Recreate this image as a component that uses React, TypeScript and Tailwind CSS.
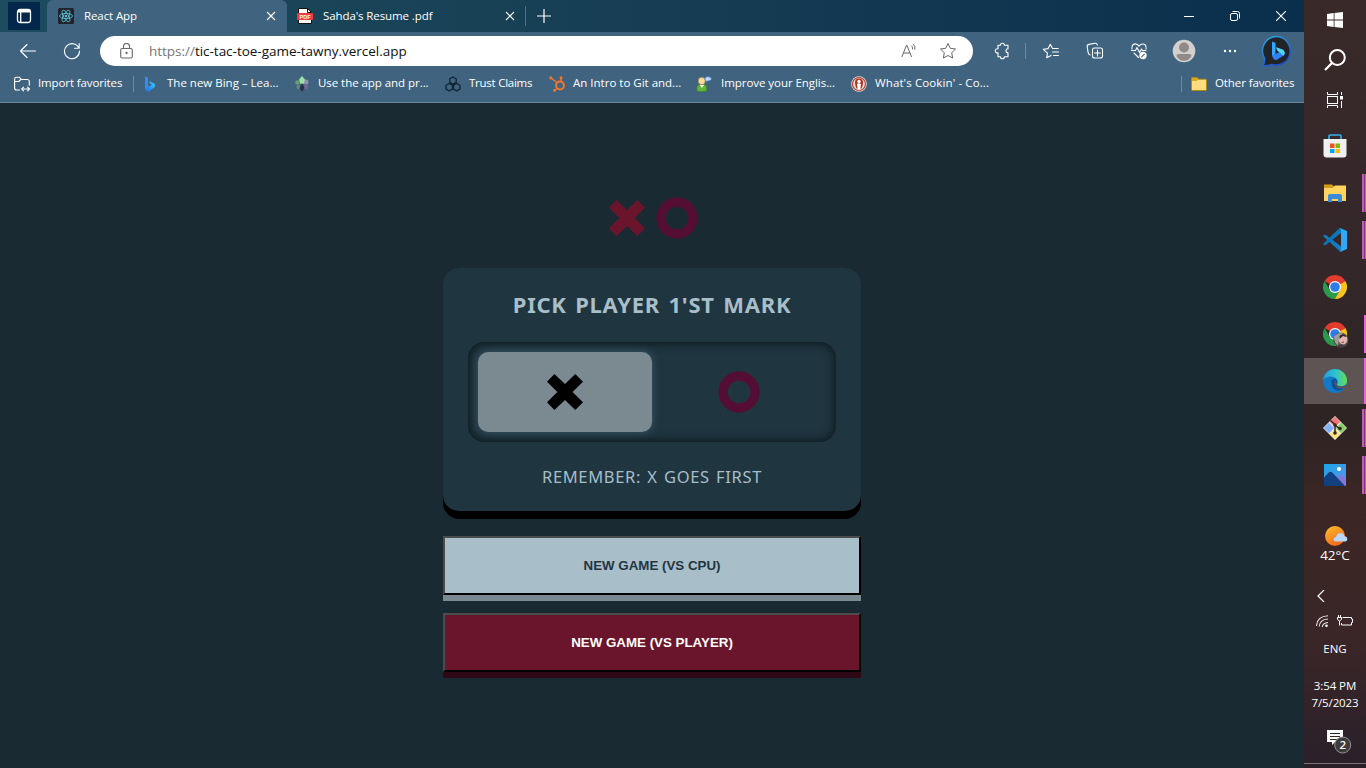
import React from "react";

const UI = "font-['Open_Sans','Noto_Sans',sans-serif]";

function Txt({ children, className = "" }: { children: React.ReactNode; className?: string }) {
  return <span className={`whitespace-nowrap ${UI} ${className}`}>{children}</span>;
}

function Close() {
  return (
    <svg width="10" height="10" viewBox="0 0 10 10" stroke="#fff" strokeWidth="1.1" className="shrink-0">
      <path d="M1 1 9 9M9 1 1 9" />
    </svg>
  );
}

function BingMark({ size = 16, id }: { size?: number; id: string }) {
  return (
    <svg width={size} height={size} viewBox="0 0 16 16" className="shrink-0">
      <defs>
        <linearGradient id={id} x1="0" y1="1" x2="1" y2="0">
          <stop offset="0" stopColor="#1b6df0" />
          <stop offset="1" stopColor="#3fd0f5" />
        </linearGradient>
      </defs>
      <path d="M2 .5 5 1.600v9.600l-3 2z" fill="#2f8dff" />
      <path d="M2 13.200 5 11l4-2.200-2-1-1-2.800 5.200 2.400c1.300 1 1.300 3 0 4.200L5.700 15.500C4.500 16 2.800 15 2 13.200z" fill={`url(#${id})`} />
    </svg>
  );
}

function CrossMark({ color }: { color: string }) {
  return (
    <svg width="36" height="36" viewBox="0 0 107 107" fill={color}>
      <path d="M22 0 53.5 30 84 0l23 23-31 30.5L107 84l-23 23-30.500-30L22 107 0 84l31-30.500L0 23z" />
    </svg>
  );
}

function CircleMark() {
  return (
    <svg width="42" height="42" viewBox="0 0 42 42" fill="none">
      <circle cx="21" cy="21" r="16" stroke="#540e33" strokeWidth="9.300" />
    </svg>
  );
}

function TabStrip() {
  return (
    <div className="flex h-8 items-center bg-gradient-to-r from-[#1d4c5e] via-[#163d53] to-[#0a2f4d]">
      <div className="ml-2 flex h-7 w-8 items-center justify-center bg-[#03274a]">
        <svg width="16" height="16" viewBox="0 0 16 16" fill="none" stroke="#fff" strokeWidth="1.3">
          <rect x="1.500" y="1.500" width="13" height="13" rx="2.500" />
          <path d="M2 3h12" strokeWidth="3" />
          <path d="M4.700 4v10" />
        </svg>
      </div>
      <div className="ml-[7px] flex h-8 w-60 items-center rounded-t-md bg-[#40637f] pl-[11px]">
        <svg width="16" height="16" viewBox="0 0 16 16" fill="none" stroke="#61c9e4" strokeWidth=".8">
          <rect width="16" height="16" rx="1.500" fill="#20232a" stroke="none" />
          <ellipse cx="8" cy="8" rx="6.500" ry="2.600" />
          <ellipse cx="8" cy="8" rx="6.500" ry="2.600" transform="rotate(60 8 8)" />
          <ellipse cx="8" cy="8" rx="6.500" ry="2.600" transform="rotate(120 8 8)" />
          <circle cx="8" cy="8" r="1" fill="#61c9e4" />
        </svg>
        <Txt className="ml-[10px] w-[182px] text-[11.500px] tracking-[-0.1px] text-white">React App</Txt>
        <Close />
      </div>
      <svg width="16" height="16" viewBox="0 0 16 16" className="ml-[10px]">
        <path d="M1.500.5h9l4 4v11h-13z" fill="#fff" stroke="#111" />
        <path d="M10.500.5v4h4" fill="none" stroke="#111" />
        <rect y="5" width="16" height="7" rx="1" fill="#f33b3b" />
        <text x="8" y="10.500" textAnchor="middle" fontSize="5.500" fontWeight="bold" fill="#fff" fontFamily="Liberation Sans">PDF</text>
      </svg>
      <Txt className="ml-[10px] w-[182px] text-[11.500px] tracking-[-0.1px] text-white">Sahda's Resume .pdf</Txt>
      <Close />
      <div className="ml-[10px] h-5 w-px bg-[#4f7486]" />
      <svg width="14" height="14" viewBox="0 0 14 14" stroke="#fff" strokeWidth="1.200" className="ml-[11px]">
        <path d="M7 0v14M0 7h14" />
      </svg>
      <div className="ml-auto flex items-center gap-9 pr-[18px]">
        <svg width="10" height="10" viewBox="0 0 10 10" stroke="#fff"><path d="M0 5.500h10" /></svg>
        <svg width="10" height="10" viewBox="0 0 10 10" fill="none" stroke="#fff">
          <rect x=".5" y="2.500" width="7" height="7" rx="1.500" />
          <path d="M2.500.5h5a2 2 0 0 1 2 2v5" />
        </svg>
        <svg width="10" height="10" viewBox="0 0 10 10" stroke="#fff" strokeWidth="1.100"><path d="M0 0 10 10M10 0 0 10" /></svg>
      </div>
    </div>
  );
}

const ic = { fill: "none", stroke: "#fff", strokeWidth: 1.1, strokeLinejoin: "round" as const, strokeLinecap: "round" as const };

function Toolbar() {
  return (
    <div className="flex h-[38px] items-center">
      <svg width="18" height="16" viewBox="0 0 18 16" {...ic} className="ml-[19px]">
        <path d="M16.500 8H1.500M8 1.500 1.500 8 8 14.500" />
      </svg>
      <svg width="18" height="18" viewBox="0 0 18 18" {...ic} className="ml-[26px]">
        <path d="M15.800 6A7.500 7.500 0 1 0 16.500 9M16.200 1.500v4.700h-4.700" />
      </svg>
      <div className="ml-[19px] flex h-[30px] w-[873px] items-center rounded-full bg-white pl-5">
        <svg width="13" height="16" viewBox="0 0 13 16" fill="none" stroke="#666" strokeWidth="1.100">
          <rect x=".7" y="5.500" width="11.600" height="9.500" rx="1.500" />
          <path d="M3.500 5.500V3.500a3 3 0 0 1 6 0v2" />
          <circle cx="6.500" cy="10" r=".6" fill="#555" />
        </svg>
        <Txt className="ml-4 text-[13.500px] tracking-[-0.02px] text-[#101010]">
          <span className="text-[#757575]">https://</span>tic-tac-toe-game-tawny.vercel.app
        </Txt>
        <svg width="16" height="16" viewBox="0 0 16 16" fill="none" stroke="#666" className="ml-auto">
          <path d="M.8 14 5.500 2.300h.4L10.600 14M2.300 10h6.700M10.500 2.800q1.500 1.200 1 3.500M12 1q2.700 2 1.800 5.700" />
        </svg>
        <svg width="18" height="18" viewBox="0 0 18 18" fill="none" stroke="#666" strokeLinejoin="round" className="mr-4 ml-[22px]">
          <path d="m9 1.500 2.300 4.800 5.200.7-3.800 3.700.9 5.300L9 13.500 4.400 16l.9-5.300L1.500 7l5.200-.7z" />
        </svg>
      </div>
      <svg width="18" height="18" viewBox="0 0 18 18" {...ic} className="ml-5">
        <path d="M5 3.300h2.400a2 2 0 0 1 4 0H15v3.500a2 2 0 0 0 0 4v4h-3.600a2 2 0 0 1-4 0H5v-4a2.100 2.100 0 1 1 0-4z" />
      </svg>
      <div className="ml-[14px] h-4 w-px bg-[#6c8ba2]" />
      <svg width="18" height="16" viewBox="0 0 18 16" {...ic} className="ml-4">
        <path d="M5.500 10.200 1.300 6.300l4.800-.7L8.300 1.200l2.200 4.300h5.700M10.500 9h6M11.500 12.500h5M5.500 10.200l-.8 4.500 4.300-2.300" />
      </svg>
      <svg width="18" height="18" viewBox="0 0 18 18" {...ic} className="ml-[26px]">
        <rect x="6.500" y="6" width="10" height="10" rx="2" />
        <path d="M11.500 8v6M8.500 11h6M4.300 13C3 12.800 2.500 12 2.200 10.800L1.200 5c-.2-1.500.5-2.300 1.700-2.600l6-1.100c1.300-.2 2 .4 2.500 1.700" />
      </svg>
      <svg width="18" height="18" viewBox="0 0 18 18" {...ic} className="ml-[26px]">
        <path d="M2 7C1 3 4.200 1.300 6.600 2.200 8 2.700 9 4.200 9 4.200s1-1.500 2.400-2C14 1.300 17 3 16 7M1.500 8.500h4l1.500-3 2.500 5L11.500 7l1 1.500H16M4 11l4.500 4.500" />
        <circle cx="13" cy="13.500" r="3.700" fill="#fff" stroke="none" />
        <path d="m11.700 14.800 2.600-2.600" stroke="#40637f" />
      </svg>
      <svg width="24" height="24" viewBox="0 0 24 24" className="ml-[24px]">
        <circle cx="12" cy="12" r="11.300" fill="#d2cfcc" />
        <circle cx="12" cy="8.500" r="5" fill="#8f8a87" />
        <path d="M4.500 17q0-2 2-2h11q2 0 2 2-2.500 4.800-7.500 4.800T4.500 17z" fill="#8f8a87" />
      </svg>
      <svg width="14" height="4" viewBox="0 0 14 4" fill="#fff" className="ml-[27px]">
        <circle cx="2" cy="2" r="1.200" /><circle cx="7" cy="2" r="1.200" /><circle cx="12" cy="2" r="1.200" />
      </svg>
      <svg width="32" height="32" viewBox="0 0 32 32" className="ml-6 shrink-0">
        <defs>
          <linearGradient id="ring" x1="0" y1="0" x2=".5" y2="1"><stop stopColor="#2aaee8" /><stop offset="1" stopColor="#1b4fd0" /></linearGradient>
        </defs>
        <path d="M16 1.500A14.300 14.300 0 1 1 11 29.500q-5 1.500-9 1.300 2-3 1.600-7.500A14.300 14.300 0 0 1 16 1.500z" fill="#222327" stroke="url(#ring)" strokeWidth="1.500" />
        <path d="M11 6.500 14.500 8v11L11 21z" fill="#35a4ff" />
        <path d="m11 20.500 7.500-3.500-2-1.200-1.500-3.600 7 2.500q3.500 4-.5 6.500l-6 3.800q-3 .5-4.500-4.500z" fill="#2f80f5" />
        <path d="m15 12.200 7 2.500q3.200 3 .5 6l-6-4.900z" fill="#4cd8ef" />
      </svg>
    </div>
  );
}

function Bookmark({ icon, label, cell, text = "" }: { icon: React.ReactNode; label: string; cell: string; text?: string }) {
  return (
    <div className={`flex shrink-0 items-center ${cell}`}>
      {icon}
      <Txt className={`pb-[2px] text-[11.500px] text-white ${text}`}>{label}</Txt>
    </div>
  );
}

function Bookmarks() {
  return (
    <div className="flex h-[32px] items-center pb-[4px] pl-[14px]">
      <Bookmark cell="w-[119px] gap-2" text="tracking-[-0.12px]" label="Import favorites" icon={
        <svg width="16" height="16" viewBox="0 0 16 16" {...ic} overflow="visible">
          <path d="M5.500 14H2.500Q.6 14 .6 12V3Q.6 1.300 2.500 1.300h3L7.500 3.500h5.500q2.300 0 2.300 2v3.800M.8 5.500h4l2-2M8 13h7.300M9.500 11.200 7.700 13l1.800 1.800M13.700 11.200l1.800 1.800-1.800 1.800" />
        </svg>
      } />
      <div className="h-4 w-px bg-[#6c8ba2]" />
      <Bookmark cell="ml-[9px] w-[151px] gap-2" text="" label="The new Bing – Lea..." icon={<BingMark id="bing-a" />} />
      <Bookmark cell="w-[151px] gap-2" text="tracking-[-0.05px]" label="Use the app and pr..." icon={
        <svg width="16" height="16" viewBox="0 0 16 16">
          <circle cx="3.500" cy="6.500" r="2.300" fill="#679c79" /><circle cx="12" cy="6" r="2.500" fill="#8f92aa" />
          <circle cx="4.500" cy="11" r="2" fill="#628d80" /><circle cx="12" cy="11" r="2.300" fill="#74658c" />
          <path d="m8 0 3 3.500L9.500 8h-3L5 3.500z" fill="#9ae4a4" /><path d="m8 7 2.500 5L8 16l-2.500-4z" fill="#2d3044" />
        </svg>
      } />
      <Bookmark cell="w-[105px] gap-2" text="tracking-[-0.25px]" label="Trust Claims" icon={
        <svg width="16" height="16" viewBox="0 0 16 16" fill="none" stroke="#102433" strokeWidth="1.300">
          <path d="m8 1 3.200 1.800v3.600L8 8.200 4.800 6.400V2.800zM4.200 7.500l3.300 1.800V13l-3.300 1.900L1 13V9.300zM11.800 7.500 15 9.300V13l-3.200 1.900L8.500 13V9.300z" />
        </svg>
      } />
      <Bookmark cell="w-[146px] gap-[7px]" text="" label="An Intro to Git and..." icon={
        <svg width="16" height="16" viewBox="0 0 16 16" fill="none" stroke="#f2762b" strokeWidth="1.500" className="-ml-px mr-px">
          <circle cx="11" cy="9.500" r="3.900" strokeWidth="2" />
          <path d="M2 2 8 6.500M12 2v4M8 12.500l-2.500 2" />
          <circle cx="1.800" cy="1.800" r="1.600" fill="#f2762b" stroke="none" /><circle cx="12" cy="1.800" r="1.500" fill="#f2762b" stroke="none" /><circle cx="5.500" cy="14.500" r="1.400" fill="#f2762b" stroke="none" />
        </svg>
      } />
      <Bookmark cell="w-[155px] gap-[9px]" text="tracking-[-0.05px]" label="Improve your Englis..." icon={
        <svg width="16" height="16" viewBox="0 0 16 16">
          <path d="M.8 15V12q0-3.500 3-3.500h4q3 0 3 3.500v3q-5 1.300-10 0z" fill="#60b53b" stroke="#39772d" strokeWidth=".6" />
          <path d="m4 9 1.800 3L8 9z" fill="#fff" />
          <circle cx="5.800" cy="5" r="3.700" fill="#f5dc98" stroke="#8a6c3c" strokeWidth=".6" />
          <path d="M9 1.500q3-2 6 0 1.300 2-1 3.300l-3 .4-2 1.300.6-2Q8.300 3 9 1.500z" fill="#b7d8ff" stroke="#3265b8" strokeWidth=".7" />
        </svg>
      } />
      <Bookmark cell="gap-2" text="tracking-[0.11px]" label="What's Cookin' - Co..." icon={
        <svg width="16" height="16" viewBox="0 0 16 16">
          <circle cx="8" cy="8" r="7.800" fill="#eee1dc" />
          <circle cx="8" cy="8" r="6.500" fill="none" stroke="#b34130" strokeWidth="1.200" />
          <path d="M8 2.500q4 0 4 4 0 3-1.500 6h-5Q4 9.500 4 6.500q0-4 4-4z" fill="#a93427" /><circle cx="8" cy="5.500" r="1.700" fill="#fff" /><path d="m6 8q2-1.500 4 0l-.8 5.500H6.800z" fill="#fff" />
        </svg>
      } />
      <div className="ml-auto h-4 w-px bg-[#6c8ba2]" />
      <Bookmark cell="ml-[9px] w-[113px] gap-[8px]" text="tracking-[-0.1px]" label="Other favorites" icon={
        <svg width="16" height="14" viewBox="0 0 16 14">
          <path d="M.5 1.500q0-1 1-1H6l1.500 1.700h7q1 0 1 1v9.300q0 1-1 1h-13q-1 0-1-1z" fill="#ffdc7c" stroke="#b08a13" />
          <path d="M1 1h5l1.300 1.500L5.800 4H1z" fill="#d9a620" />
        </svg>
      } />
    </div>
  );
}

function Game() {
  return (
    <main className="flex flex-1 flex-col items-center bg-[#1a2a33]">
      <div className="mt-[94px] flex h-[42px] items-center gap-[11px] pl-[3px]">
        <CrossMark color="#6b152d" />
        <CircleMark />
      </div>
      <section className="mt-[29px] flex h-[243px] w-[418px] flex-col items-center rounded-2xl bg-[#1f3540] shadow-[0_8px_0_#000]">
        <h1 className="mt-[20px] h-8 text-center font-['Noto_Sans',sans-serif] text-[22px] leading-8 font-bold tracking-[0.75px] [word-spacing:2px] whitespace-nowrap text-[#a8bec9]">
          PICK PLAYER 1'ST MARK
        </h1>
        <div className="mt-[22px] flex h-[100px] w-[368px] rounded-2xl p-[10px] shadow-[inset_0_0_8px_2px_#0e1b20]">
          <button className="flex flex-1 items-center justify-center rounded-[10px] bg-[#7b8990] shadow-[0_0_10px_#3f5a66]"><CrossMark color="#000" /></button>
          <button className="flex flex-1 items-center justify-center"><CircleMark /></button>
        </div>
        <p className="mt-[23px] font-['Noto_Sans',sans-serif] text-[16.500px] leading-6 tracking-[0.67px] [word-spacing:1.300px] whitespace-nowrap text-[#a8bec9]">REMEMBER: X GOES FIRST</p>
      </section>
      <button className="mt-[25px] h-[59px] w-[418px] border-2 border-t-[#4c4c4c] border-r-black border-b-black border-l-[#4c4c4c] bg-[#a8bec9] font-['Liberation_Sans',sans-serif] text-[13.333px] font-bold text-[#1f3540] shadow-[0_6px_0_#7b8990]">
        NEW GAME (VS CPU)
      </button>
      <button className="mt-[18px] h-[59px] w-[418px] border-2 border-t-[#4c4c4c] border-r-black border-b-black border-l-[#4c4c4c] bg-[#6b152d] font-['Liberation_Sans',sans-serif] text-[13.333px] font-bold text-white shadow-[0_6px_0_#2e0915]">
        NEW GAME (VS PLAYER)
      </button>
    </main>
  );
}

function Chrome({ badge = false }: { badge?: boolean }) {
  return (
    <svg width="24" height="24" viewBox="0 0 24 24" overflow="visible">
      <path d="M12 12 1.600 6A12 12 0 0 1 22.400 6z" fill="#e33b2e" />
      <path d="M12 12 22.400 6A12 12 0 0 1 12 24z" fill="#fcc31e" />
      <path d="M1.600 6A12 12 0 0 0 12 24l5.200-9-10.400 0z" fill="#2c9a4b" />
      <path d="M12 6h10.400L17 9z" fill="#e33b2e" />
      <circle cx="12" cy="12" r="6" fill="#fff" />
      <circle cx="12" cy="12" r="4.800" fill="#2b7de9" />
      {badge && (
        <g>
          <circle cx="17.700" cy="18" r="7.600" fill="#5c5756" />
          <path d="M11 14.500q5-5 9-3l-4 5-1 7q-4-3-4-9z" fill="#a09c9a" />
          <ellipse cx="20" cy="17.500" rx="4.300" ry="5" fill="#e1b8ae" />
          <path d="M16.500 14q3-3 6.500-.5v1.500l-3-1-3.500 3z" fill="#33272a" />
          <path d="m18.500 20.500 2.500-.5" stroke="#8f3f48" />
          <path d="M14 24q4-3.500 8 0l-4 1.500z" fill="#443e40" />
        </g>
      )}
    </svg>
  );
}

function Slot({ children, mark, active = false }: { children: React.ReactNode; mark?: "single" | "double"; active?: boolean }) {
  return (
    <div className="relative flex h-[47px] items-start justify-center">
      <div className={`flex h-[46px] w-full items-center justify-center ${active ? "bg-[#5d5453]" : ""}`}>{children}</div>
      {mark === "double" && (
        <div className="absolute top-1 right-0 flex h-[38px]">
          <div className="w-[2px] bg-[#c15ab9]" />
          <div className="w-px bg-[#793c74]" />
          <div className="w-px bg-[#c15ab9]" />
        </div>
      )}
      {mark === "single" && <div className={`absolute right-0 w-0.5 bg-[#f062e4] ${active ? "top-0 h-[46px]" : "top-1 h-[38px]"}`} />}
    </div>
  );
}

function Taskbar() {
  return (
    <aside className="flex w-[62px] flex-col bg-[linear-gradient(#392a29_0,#34272a_35%,#2d2423_55%,#3c2625_66%,#3a2627_84%,#29202a_100%)]">
      <div className="flex h-10 items-center justify-center">
        <svg width="16" height="16" viewBox="0 0 16 16" fill="#fff"><path d="M0 2 6.700 1v6.600H0zM7.500.9 16 0v7.600H7.500zM0 8.400h6.700V15L0 14zM7.500 8.400H16V16l-8.500-1z" /></svg>
      </div>
      <div className="flex h-10 items-center justify-center">
        <svg width="22" height="22" viewBox="0 0 22 22" fill="none" stroke="#fff" strokeWidth="2"><circle cx="13.300" cy="8.500" r="7.500" /><path d="m8 14-7 7" strokeWidth="2.300" /></svg>
      </div>
      <div className="flex h-[43px] items-start justify-center pt-3">
        <svg width="16" height="16" viewBox="0 0 16 16" fill="none" stroke="#fff"><path d="M.5 0v2.500h10V0M.5 16v-2.500h10V16M14.500 0v3M14.500 9v7" /><rect x=".5" y="4.500" width="10" height="7" /><path d="M13 4h3v3.500h-3z" fill="#fff" stroke="none" /></svg>
      </div>
      <Slot>
        <svg width="24" height="24" viewBox="0 0 24 24"><path d="M6 5V2q0-1 1-1h10q1 0 1 1v3" fill="none" stroke="#34b1ef" strokeWidth="1.600" /><path d="M.5 5h23v15.500q0 3-3 3h-17q-3 0-3-3z" fill="#f0f0f0" /><path d="M7 9.500h4.500V14H7z" fill="#f15022" /><path d="M12.500 9.500H17V14h-4.500z" fill="#7db900" /><path d="M7 15h4.500v4H7z" fill="#00a3ee" /><path d="M12.500 15H17v4h-4.500z" fill="#fdb900" /></svg>
      </Slot>
      <Slot mark="double">
        <svg width="22" height="18" viewBox="0 0 22 18"><path d="M0 .5h8l2 2v1H0z" fill="#dc9c0a" /><path d="M0 3.500h9l2-2h11V17H0z" fill="#ffd35f" /><path d="M4 18v-6q0-2 2-2h10q2 0 2 2v6h-4v-3H8v3z" fill="#3b8bd9" /></svg>
      </Slot>
      <Slot mark="double">
        <svg width="24" height="24" viewBox="0 0 24 24"><path d="m0 8 2-1.500L19 19v4.500L17.500 24z" fill="#147cc1" /><path d="m0 16 2 1.600L18 5V0h-1.500z" fill="#0878bd" /><path d="m17 0 7 3v18l-7 3 1-1V1z" fill="#30a8f5" /></svg>
      </Slot>
      <Slot><Chrome /></Slot>
      <Slot mark="single"><Chrome badge /></Slot>
      <Slot mark="single" active>
        <svg width="24" height="24" viewBox="0 0 24 24">
          <defs><linearGradient id="eg"><stop stopColor="#229fdc" /><stop offset=".55" stopColor="#31c4cb" /><stop offset="1" stopColor="#64df4e" /></linearGradient></defs>
          <circle cx="12" cy="12" r="11.900" fill="#1379c6" />
          <path d="M.1 11A12 12 0 0 1 24 11c.5 5-3.500 6.500-7 6.200-2.500-.2-3.700-1.300-3-2.200 1.500-2 .8-5-2.500-6.500C7 6.500 2 8 .1 11z" fill="url(#eg)" />
          <path d="M8.300 13q.5-3 3.700-3.500 3 1.500 2 5.500-.7 1.200 1 2 3 1.300 7 0-3 5-8 4.500-5.500-1.500-5.700-8.500z" fill="#0c4f9c" />
          <path d="M12 11.500q1.700.8 1.600 3-.5 1.800 1.900 2.700 3.500 1.200 7.500-.7l1 0-.8 2.200q-4.500 1.500-8 .2-5-2-3.200-7.400z" fill="#5d5453" />
        </svg>
      </Slot>
      <Slot mark="double">
        <svg width="24" height="24" viewBox="0 0 24 24">
          <path d="M12 0 24 12 12 24 0 12z" fill="#f2efe9" />
          <path d="m12 .8 5.200 5.200-5.200 5-5.200-5z" fill="#f37474" /><path d="m6 6.800 5.200 5.200L6 17.200.8 12z" fill="#83b2fa" /><path d="m18 6.800 5.200 5.200-5.200 5.200-5.200-5.200z" fill="#85cf61" /><path d="m12 13 5.200 5-5.200 5.200L6.800 18z" fill="#ffe17d" />
          <path d="m7.500 4.500 4.500 4v9M12 9l5 4" fill="none" stroke="#392424" strokeWidth="1.500" /><circle cx="12" cy="9" r="1.800" fill="#392424" /><circle cx="12" cy="17" r="1.800" fill="#392424" /><circle cx="17" cy="12.500" r="1.800" fill="#392424" />
        </svg>
      </Slot>
      <Slot mark="double">
        <svg width="22" height="22" viewBox="0 0 22 22"><defs><linearGradient id="ph" x2="1" y2="1"><stop stopColor="#19a5ea" /><stop offset="1" stopColor="#5d91e4" /></linearGradient></defs><path d="M0 0h22v22H0z" fill="url(#ph)" /><path d="m12 15 4-4q1-.8 2 0l4 4v7h-7z" fill="#8278d8" /><path d="m0 13.500 5-5.200q1.500-1 3 0L21 22H0z" fill="#123f7e" /><circle cx="15" cy="5" r="2.100" fill="#fff" /></svg>
      </Slot>
      <div className="flex h-[79px] flex-col items-center pt-[26px]">
        <svg width="24" height="22" viewBox="0 0 24 22" className="ml-px"><defs><linearGradient id="sun" x2=".5" y2="1"><stop stopColor="#ffbf2c" /><stop offset="1" stopColor="#f26b1d" /></linearGradient></defs><circle cx="11" cy="11" r="10" fill="url(#sun)" /><path d="M12 16.500q-2.500 0-2.500-2.300 0-2 2.500-2.200 1-4 4.500-4 3 0 4 3.200 2.800.3 2.800 2.800t-2.500 2.500z" fill="#b9d6fc" /></svg>
        <Txt className="text-[13.500px] leading-[17px] text-white">42°C</Txt>
      </div>
      <div className="flex h-[35px] items-center pl-[13px]">
        <svg width="8" height="12" viewBox="0 0 8 12" fill="none" stroke="#fff" strokeWidth="1.200"><path d="M7 0 1 6l6 6" /></svg>
      </div>
      <div className="flex h-[16px] items-center gap-[9px] pl-3">
        <svg width="12" height="12" viewBox="0 0 12 12" fill="none" stroke="#e8e2e2" strokeWidth="1.100"><path d="M.5 11Q1 1.500 12 .8M3.300 11.500Q3.700 4.500 12 4M6.300 12q.3-4 5.700-4.500" /><circle cx="10.500" cy="10.700" r="1.300" fill="#fff" stroke="none" /></svg>
        <svg width="16" height="12" viewBox="0 0 16 12" fill="none" stroke="#fff"><path d="M5.500 2.500h9V4h1v3.500h-1v2.500h-10V8M1.500 0v2M3.500 0v2M.5 2.500h4v2l-2 1.500-2-1.500zM2.500 6v4.500" /></svg>
      </div>
      <Txt className="mt-[12px] h-4 text-center text-[11.500px] leading-4 text-white">ENG</Txt>
      <Txt className="mt-[20px] text-center text-[11.500px] leading-[17px] tracking-[-0.1px] text-white">3:54 PM</Txt>
      <Txt className="flex justify-center text-[11.500px] leading-[17px] tracking-[-0.1px] text-white">7/5/2023</Txt>
      <svg width="26" height="26" viewBox="0 0 26 26" className="mt-[18px] ml-[22px]">
        <path d="M1 1h16v12H9l-3 3v-3H1z" fill="#fff" /><path d="M4 4.500h10M4 7.500h10M4 10.500h10" stroke="#332627" />
        <circle cx="16.700" cy="16" r="8" fill="#3d3b3c" stroke="#929091" />
        <text x="16.700" y="20" textAnchor="middle" fontSize="11.500" fontFamily="Open Sans" fontWeight="600" fill="#fff">2</text>
      </svg>
      <div className="mt-auto mb-1 h-px bg-[#7b7475]" />
    </aside>
  );
}

export default function App() {
  return (
    <div className="flex h-screen w-screen overflow-hidden">
      <div className="flex w-[1304px] shrink-0 flex-col">
        <TabStrip />
        <div className="flex h-[71px] flex-col border-b border-[#6a8598] bg-[#40637f]">
          <Toolbar />
          <Bookmarks />
        </div>
        <Game />
      </div>
      <Taskbar />
    </div>
  );
}
